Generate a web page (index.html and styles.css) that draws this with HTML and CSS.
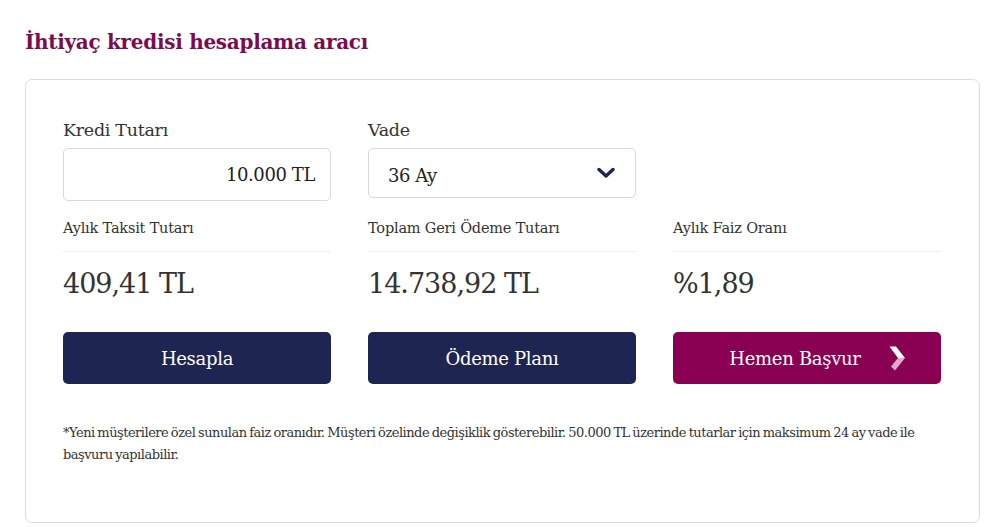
FILE: index.html
```html
<!DOCTYPE html>
<html lang="tr">
<head>
<meta charset="utf-8">
<link rel="stylesheet" href="styles.css">
</head>
<body>
<h1 class="title">İhtiyaç kredisi hesaplama aracı</h1>
<div class="card">
  <div class="grid">
    <div class="field">
      <label class="label">Kredi Tutarı</label>
      <div class="input">10.000 TL</div>
    </div>
    <div class="field">
      <label class="label">Vade</label>
      <div class="select"><span>36 Ay</span>
        <svg class="chev" width="18" height="12" viewBox="0 0 18 12"><path d="M2 2.5 L9 9 L16 2.5" fill="none" stroke="#1e2552" stroke-width="3.4" stroke-linecap="round" stroke-linejoin="round"/></svg>
      </div>
    </div>
    <div class="field"></div>

    <div class="stat"><div class="stat-label">Aylık Taksit Tutarı</div><div class="stat-value">409,41 TL</div></div>
    <div class="stat"><div class="stat-label">Toplam Geri Ödeme Tutarı</div><div class="stat-value">14.738,92 TL</div></div>
    <div class="stat"><div class="stat-label">Aylık Faiz Oranı</div><div class="stat-value">%1,89</div></div>

    <button class="btn navy">Hesapla</button>
    <button class="btn navy">Ödeme Planı</button>
    <button class="btn magenta"><span>Hemen Başvur</span>
      <svg class="arrow" width="16" height="26" viewBox="0 0 16 26"><path d="M0.5 1.5 L7 1.5 L16 13 L9 13 Z" fill="#ffffff"/><path d="M9 13 L16 13 L6 25.5 L2 21.5 Z" fill="#e3a6cc"/></svg>
    </button>
  </div>
  <p class="note">*Yeni müşterilere özel sunulan faiz oranıdır. Müşteri özelinde değişiklik gösterebilir. 50.000 TL üzerinde tutarlar için maksimum 24 ay vade ile başvuru yapılabilir.</p>
</div>
</body>
</html>
```
FILE: styles.css
```css
* { box-sizing: border-box; }
body {
  margin: 0;
  background: #fff;
  font-family: "DejaVu Serif", "Liberation Serif", serif;
  color: #333;
}
.title {
  margin: 0;
  padding: 28px 0 0 25px;
  font-size: 20px;
  line-height: 28px;
  font-weight: bold;
  color: #7b0c50;
  letter-spacing: -0.3px;
}
.card {
  margin: 23px 13px 0 25px;
  border: 1px solid #dcdcdc;
  border-radius: 7px;
  height: 444px;
  padding: 38px 37px 0 37px;
}
.grid {
  display: grid;
  grid-template-columns: 268px 268px 268px;
  column-gap: 37px;
}
.label {
  display: block;
  font-size: 17.5px;
  line-height: 24px;
  color: #333;
  margin-bottom: 6px;
  letter-spacing: -0.3px;
}
.input {
  height: 53px;
  border: 1px solid #d9d9d9;
  border-radius: 5px;
  text-align: right;
  padding: 0 15px;
  font-size: 18px;
  line-height: 51px;
  color: #222;
  letter-spacing: -0.4px;
}
.select {
  height: 50px;
  border: 1px solid #d9d9d9;
  border-radius: 5px;
  padding: 0 20px 0 19px;
  display: flex;
  align-items: center;
  justify-content: space-between;
  font-size: 18px;
  color: #222;
  letter-spacing: -0.5px;
}
.select span { padding-top: 4px; }
.stat { margin-top: 17px; }
.stat-label {
  font-size: 14.5px;
  line-height: 20px;
  color: #333;
  padding-bottom: 13px;
  border-bottom: 1px solid #eeeeee;
  letter-spacing: -0.2px;
}
.stat-value {
  font-size: 27px;
  line-height: 36px;
  padding-top: 14px;
  color: #333;
  letter-spacing: -1px;
}
.btn {
  margin-top: 30px;
  height: 52px;
  border: none;
  border-radius: 5px;
  font-family: inherit;
  font-size: 18px;
  color: #fff;
  letter-spacing: -0.3px;
  display: flex;
  align-items: center;
  justify-content: center;
  padding: 0;
}
.navy { background: #1e2552; }
.magenta { background: #8a0052; gap: 28px; padding-left: 20px; }
.note {
  margin: 38px 0 0 0;
  font-size: 13px;
  line-height: 22px;
  color: #333;
  letter-spacing: -0.5px;
  word-spacing: -1px;
  padding-right: 20px;
}
```
